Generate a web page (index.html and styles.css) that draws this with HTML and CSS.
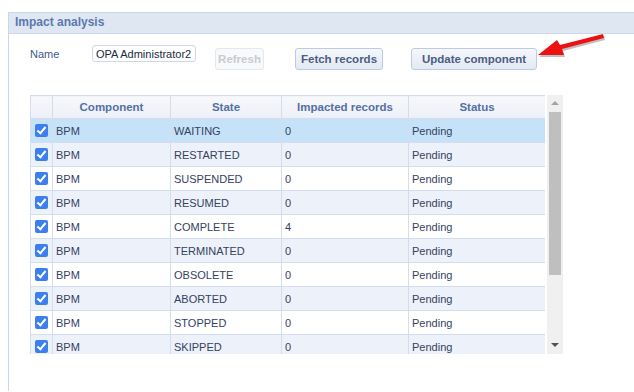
FILE: index.html
```html
<!DOCTYPE html>
<html lang="en">
  <head>
    <meta charset="UTF-8" />
    <title>Impact analysis</title>
    <link rel="stylesheet" href="styles.css">
  </head>
  <body>
    <div class="panel">
      <div class="panel-header">Impact analysis</div>
      <div class="panel-body">
        <div class="form-row">
          <label class="field-label">Name</label>
          <input class="field-input" type="text" value="OPA Administrator2" />
          <button class="btn btn-refresh" disabled>Refresh</button>
          <button class="btn btn-fetch">Fetch records</button>
          <button class="btn btn-update">Update component</button>
        </div>

        <div class="grid-wrap">
          <div class="grid-view">
            <table class="grid">
              <thead>
                <tr>
                  <th class="col-check"></th>
                  <th class="col-comp">Component</th>
                  <th class="col-state">State</th>
                  <th class="col-count">Impacted records</th>
                  <th class="col-status">Status</th>
                </tr>
              </thead>
              <tbody id="rows"></tbody>
            </table>
          </div>
          <div class="scrollbar">
            <span class="arrow-up"></span>
            <div class="thumb"></div>
            <span class="arrow-down"></span>
          </div>
        </div>
      </div>
    </div>

    <svg class="pointer" width="80" height="36" viewBox="0 0 80 36">
      <g transform="translate(1,2)" fill="rgba(0,0,0,0.25)">
        <polygon points="66,0 67,4 25,15 27,21 1,21 20,6 23,11" />
      </g>
      <polygon fill="#ee1111" points="66,0 67,4 25,15 27,21 1,21 20,6 23,11" />
    </svg>

    <script>
      var states = ["WAITING", "RESTARTED", "SUSPENDED", "RESUMED", "COMPLETE",
        "TERMINATED", "OBSOLETE", "ABORTED", "STOPPED", "SKIPPED"];
      var counts = [0, 0, 0, 0, 4, 0, 0, 0, 0, 0];
      var body = document.getElementById("rows");
      for (var i = 0; i < states.length; i++) {
        var tr = document.createElement("tr");
        if (i === 0) tr.className = "selected";
        else if (i % 2 === 1) tr.className = "alt";
        tr.innerHTML =
          '<td class="col-check"><span class="check"></span></td>' +
          "<td>BPM</td><td>" + states[i] + "</td><td>" + counts[i] +
          "</td><td>Pending</td>";
        body.appendChild(tr);
      }
    </script>
  </body>
</html>
```

FILE: styles.css
```css
body {
  font-family: "Liberation Sans", Arial, sans-serif;
  font-size: 11px;
  margin: 0;
  padding: 12px 0 0 8px;
  background-color: #fff;
  color: #34425e;
  overflow: hidden;
}

.panel {
  border-left: 1px solid #cbd6ea;
  border-top: 1px solid #cbd6ea;
  height: 378px;
}

.panel-header {
  height: 20px;
  line-height: 18px;
  padding-left: 6px;
  background-color: #dfe7f3;
  border-bottom: 1px solid #cbd6ea;
  color: #5d78ae;
  font-size: 12px;
  font-weight: bold;
}

.panel-body {
  padding: 11px 0 0 21px;
}

.form-row {
  display: flex;
  align-items: flex-start;
  height: 50px;
}

.field-label {
  color: #3e5a8a;
  margin-top: 3px;
  width: 62px;
}

.field-input {
  width: 104px;
  height: 17px;
  padding: 0 3px;
  box-sizing: border-box;
  border: 1px solid #cfd8e8;
  border-radius: 3px;
  font-family: inherit;
  font-size: 11px;
  color: #1a2a44;
}

.btn {
  margin-top: 3px;
  height: 22px;
  padding: 0;
  border: 1px solid #bccbe3;
  border-radius: 3px;
  background: linear-gradient(#f5f7fb, #e3e9f3);
  color: #4a5d82;
  font-family: inherit;
  font-size: 11.5px;
  font-weight: bold;
  cursor: pointer;
}

.btn-refresh {
  margin-left: 19px;
  width: 49px;
  color: #c9cbd0;
  border-color: #e3e7ef;
  background: #f8f9fb;
}

.btn-fetch {
  margin-left: 31px;
  width: 88px;
}

.btn-update {
  margin-left: 28px;
  width: 126px;
}

.grid-wrap {
  display: flex;
  height: 259px;
}

.grid-view {
  width: 515px;
  overflow: hidden;
}

.grid {
  border-collapse: collapse;
  table-layout: fixed;
  width: 515px;
}

.grid th,
.grid td {
  box-sizing: border-box;
  border: 1px solid #d3ddee;
  padding: 0 3px;
  white-space: nowrap;
  text-align: left;
}

.grid th {
  height: 23px;
  text-align: center;
  font-size: 11.5px;
  color: #5470a8;
  background: linear-gradient(#f7f8fb, #edf0f6);
}

.grid td {
  height: 24px;
  padding-top: 1px;
}

.grid tr.alt td {
  background-color: #edf1f9;
}

.grid tr.selected td {
  background-color: #c6e2f8;
}

.grid .col-check {
  width: 22px;
  padding: 0;
  text-align: center;
}

.col-comp { width: 118px; }
.col-state { width: 111px; }
.col-count { width: 127px; }
.col-status { width: 137px; }

.check {
  display: inline-block;
  position: relative;
  width: 13px;
  height: 13px;
  border-radius: 2px;
  background-color: #3d7ff0;
  vertical-align: middle;
  margin-top: -1px;
}

.check::after {
  content: "";
  position: absolute;
  left: 4px;
  top: 1px;
  width: 3px;
  height: 7px;
  border: solid #fff;
  border-width: 0 2px 2px 0;
  transform: rotate(40deg);
}

.scrollbar {
  margin-left: 2px;
  width: 16px;
  background-color: #f0f0f0;
  position: relative;
}

.thumb {
  position: absolute;
  left: 2px;
  top: 17px;
  width: 12px;
  height: 163px;
  background-color: #bfbfbf;
}

.arrow-up,
.arrow-down {
  position: absolute;
  left: 4px;
  width: 0;
  height: 0;
  border-left: 4px solid transparent;
  border-right: 4px solid transparent;
}

.arrow-up {
  top: 6px;
  border-bottom: 4px solid #a3a3a3;
}

.arrow-down {
  bottom: 7px;
  border-top: 4px solid #505050;
}

.pointer {
  position: absolute;
  left: 537px;
  top: 34px;
}
```
